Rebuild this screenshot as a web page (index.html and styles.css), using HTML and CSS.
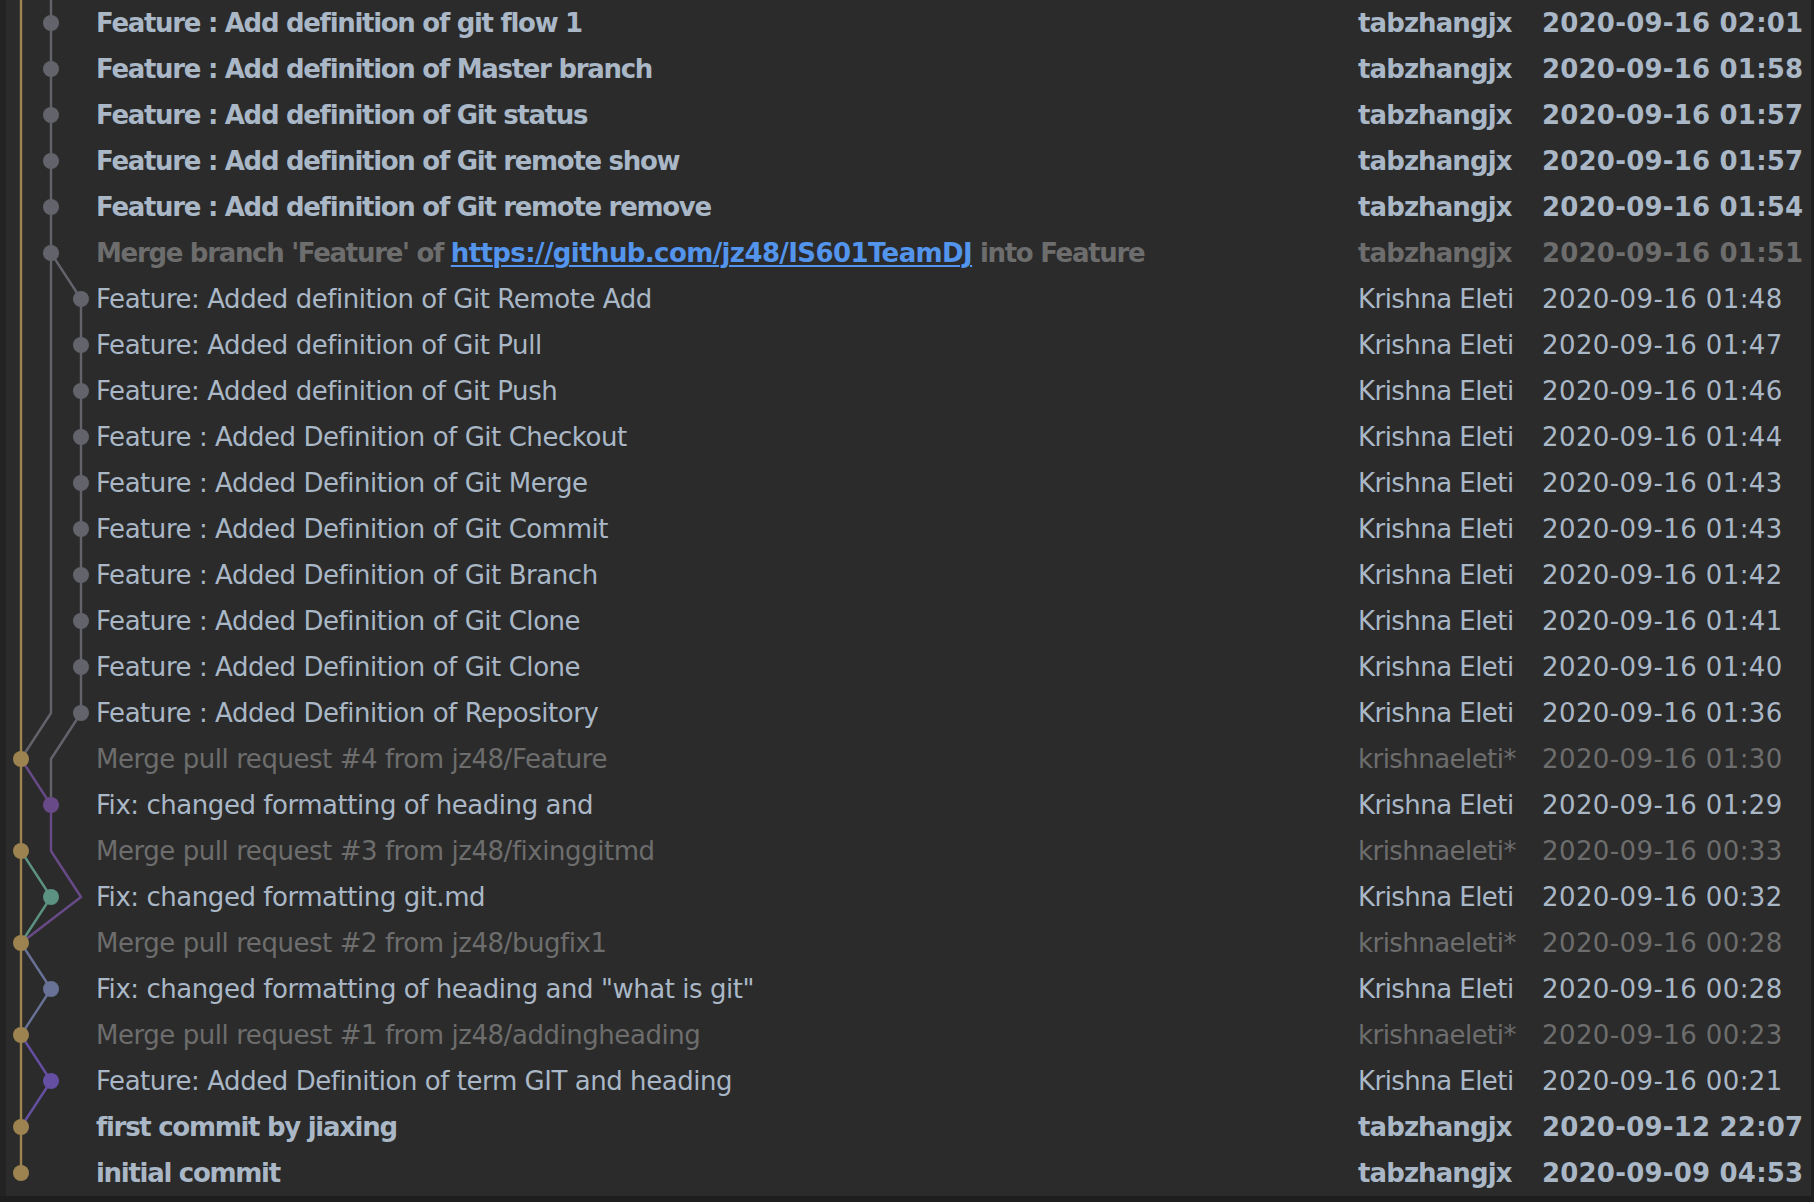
FILE: index.html
```html
<!DOCTYPE html>
<html>
<head>
<meta charset="utf-8">
<link rel="stylesheet" href="styles.css">
</head>
<body>
<div class="log">
  <svg class="graph" width="90" height="1196" viewBox="0 0 90 1196">
    <g fill="none" stroke-width="2.4" stroke-linejoin="round">
      <path d="M15 0 V1173" stroke="#9c8350"/>
      <path d="M45 0 V713 L15 759" stroke="#63636c"/>
      <path d="M45 253 L75 299 V713 L45 759 V805" stroke="#63636c"/>
      <path d="M15 759 L45 805 V851 L75 897 L15 943" stroke="#694a88"/>
      <path d="M15 851 L45 897 L15 943" stroke="#5c9282"/>
      <path d="M15 943 L45 989 L15 1035" stroke="#687196"/>
      <path d="M15 1035 L45 1081 L15 1127" stroke="#644fa3"/>
    </g>
    <g fill="#63636c">
      <circle cx="45" cy="23" r="8"/>
      <circle cx="45" cy="69" r="8"/>
      <circle cx="45" cy="115" r="8"/>
      <circle cx="45" cy="161" r="8"/>
      <circle cx="45" cy="207" r="8"/>
      <circle cx="45" cy="253" r="8"/>
      <circle cx="75" cy="299" r="8"/>
      <circle cx="75" cy="345" r="8"/>
      <circle cx="75" cy="391" r="8"/>
      <circle cx="75" cy="437" r="8"/>
      <circle cx="75" cy="483" r="8"/>
      <circle cx="75" cy="529" r="8"/>
      <circle cx="75" cy="575" r="8"/>
      <circle cx="75" cy="621" r="8"/>
      <circle cx="75" cy="667" r="8"/>
      <circle cx="75" cy="713" r="8"/>
    </g>
    <g fill="#9c8350">
      <circle cx="15" cy="759" r="8"/>
      <circle cx="15" cy="851" r="8"/>
      <circle cx="15" cy="943" r="8"/>
      <circle cx="15" cy="1035" r="8"/>
      <circle cx="15" cy="1127" r="8"/>
      <circle cx="15" cy="1173" r="8"/>
    </g>
    <circle cx="45" cy="805" r="8" fill="#694a88"/>
    <circle cx="45" cy="897" r="8" fill="#5c9282"/>
    <circle cx="45" cy="989" r="8" fill="#687196"/>
    <circle cx="45" cy="1081" r="8" fill="#644fa3"/>
  </svg>
  <div class="rows">
    <div class="row bold"><span class="msg">Feature : Add definition of git flow 1</span><span class="author">tabzhangjx</span><span class="date">2020-09-16 02:01</span></div>
    <div class="row bold"><span class="msg">Feature : Add definition of Master branch</span><span class="author">tabzhangjx</span><span class="date">2020-09-16 01:58</span></div>
    <div class="row bold"><span class="msg">Feature : Add definition of Git status</span><span class="author">tabzhangjx</span><span class="date">2020-09-16 01:57</span></div>
    <div class="row bold"><span class="msg">Feature : Add definition of Git remote show</span><span class="author">tabzhangjx</span><span class="date">2020-09-16 01:57</span></div>
    <div class="row bold"><span class="msg">Feature : Add definition of Git remote remove</span><span class="author">tabzhangjx</span><span class="date">2020-09-16 01:54</span></div>
    <div class="row bold dim"><span class="msg">Merge branch 'Feature' of <a class="link" href="#">https://github.com/jz48/IS601TeamDJ</a> into Feature</span><span class="author">tabzhangjx</span><span class="date">2020-09-16 01:51</span></div>
    <div class="row"><span class="msg">Feature: Added definition of Git Remote Add</span><span class="author">Krishna Eleti</span><span class="date">2020-09-16 01:48</span></div>
    <div class="row"><span class="msg">Feature: Added definition of Git Pull</span><span class="author">Krishna Eleti</span><span class="date">2020-09-16 01:47</span></div>
    <div class="row"><span class="msg">Feature: Added definition of Git Push</span><span class="author">Krishna Eleti</span><span class="date">2020-09-16 01:46</span></div>
    <div class="row"><span class="msg">Feature : Added Definition of Git Checkout</span><span class="author">Krishna Eleti</span><span class="date">2020-09-16 01:44</span></div>
    <div class="row"><span class="msg">Feature : Added Definition of Git Merge</span><span class="author">Krishna Eleti</span><span class="date">2020-09-16 01:43</span></div>
    <div class="row"><span class="msg">Feature : Added Definition of Git Commit</span><span class="author">Krishna Eleti</span><span class="date">2020-09-16 01:43</span></div>
    <div class="row"><span class="msg">Feature : Added Definition of Git Branch</span><span class="author">Krishna Eleti</span><span class="date">2020-09-16 01:42</span></div>
    <div class="row"><span class="msg">Feature : Added Definition of Git Clone</span><span class="author">Krishna Eleti</span><span class="date">2020-09-16 01:41</span></div>
    <div class="row"><span class="msg">Feature : Added Definition of Git Clone</span><span class="author">Krishna Eleti</span><span class="date">2020-09-16 01:40</span></div>
    <div class="row"><span class="msg">Feature : Added Definition of Repository</span><span class="author">Krishna Eleti</span><span class="date">2020-09-16 01:36</span></div>
    <div class="row dim"><span class="msg">Merge pull request #4 from jz48/Feature</span><span class="author">krishnaeleti*</span><span class="date">2020-09-16 01:30</span></div>
    <div class="row"><span class="msg">Fix: changed formatting of heading and</span><span class="author">Krishna Eleti</span><span class="date">2020-09-16 01:29</span></div>
    <div class="row dim"><span class="msg">Merge pull request #3 from jz48/fixinggitmd</span><span class="author">krishnaeleti*</span><span class="date">2020-09-16 00:33</span></div>
    <div class="row"><span class="msg">Fix: changed formatting git.md</span><span class="author">Krishna Eleti</span><span class="date">2020-09-16 00:32</span></div>
    <div class="row dim"><span class="msg">Merge pull request #2 from jz48/bugfix1</span><span class="author">krishnaeleti*</span><span class="date">2020-09-16 00:28</span></div>
    <div class="row"><span class="msg">Fix: changed formatting of heading and "what is git"</span><span class="author">Krishna Eleti</span><span class="date">2020-09-16 00:28</span></div>
    <div class="row dim"><span class="msg">Merge pull request #1 from jz48/addingheading</span><span class="author">krishnaeleti*</span><span class="date">2020-09-16 00:23</span></div>
    <div class="row"><span class="msg">Feature: Added Definition of term GIT and heading</span><span class="author">Krishna Eleti</span><span class="date">2020-09-16 00:21</span></div>
    <div class="row bold"><span class="msg">first commit by jiaxing</span><span class="author">tabzhangjx</span><span class="date">2020-09-12 22:07</span></div>
    <div class="row bold"><span class="msg">initial commit</span><span class="author">tabzhangjx</span><span class="date">2020-09-09 04:53</span></div>
  </div>
</div>
<div class="footer"></div>
</body>
</html>
```
FILE: styles.css
```css
html, body {
  margin: 0;
  padding: 0;
  background: #1e1e1e;
}
body {
  width: 1814px;
  height: 1202px;
  overflow: hidden;
  font-family: "DejaVu Sans", "Liberation Sans", sans-serif;
  font-size: 26px;
  color: #a9b7c6;
}
.log {
  display: flex;
  background: #2b2b2b;
  border-left: 6px solid #232323;
  border-right: 3px solid #1e1e1e;
  height: 1196px;
}
.graph {
  display: block;
  flex: 0 0 90px;
}
.rows {
  flex: 1;
  display: flex;
  flex-direction: column;
}
.row {
  display: grid;
  grid-template-columns: 1fr 184px 269px;
  height: 46px;
  align-items: center;
  white-space: nowrap;
  line-height: 46px;
}
.msg {
  letter-spacing: -0.45px;
}
.author {
  letter-spacing: -0.55px;
}
.date {
  letter-spacing: 0.4px;
}
.row.bold {
  font-weight: bold;
}
.row.bold .msg {
  letter-spacing: -1.3px;
}
.row.bold .msg .link {
  letter-spacing: -0.6px;
}
.row.bold .author {
  letter-spacing: -0.9px;
}
.row.bold .date {
  letter-spacing: 0.2px;
}
.row.dim {
  color: #6d6d6d;
}
.link {
  color: #5394ec;
  text-decoration: underline;
  text-underline-offset: 3px;
  text-decoration-thickness: 2px;
}
.footer {
  height: 6px;
  background: #1e1e1e;
}
```
